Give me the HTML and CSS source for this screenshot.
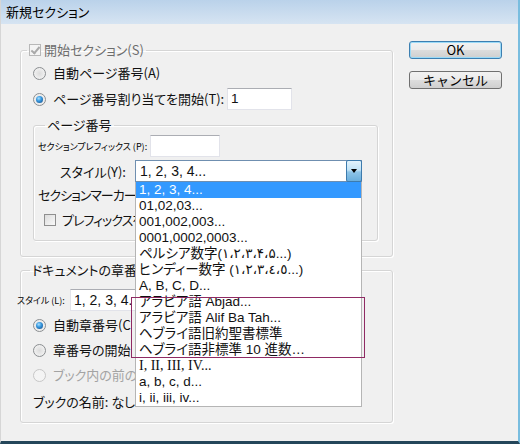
FILE: index.html
```html
<!DOCTYPE html>
<html lang="ja">
<head>
<meta charset="utf-8">
<title>新規セクション</title>
<link rel="stylesheet" href="styles.css">
</head>
<body>
<div class="window">
  <div class="titlebar">新規セクション</div>
  <div class="client">
    <div class="main">
      <fieldset class="group start">
        <legend><span class="check disabled on"></span><span class="muted">開始セクション(S)</span></legend>
        <div class="row"><span class="radio"></span><span class="lbl">自動ページ番号(A)</span></div>
        <div class="row gap4"><span class="radio on"></span><span class="lbl w174">ページ番号割り当てを開始(T):</span><span class="field w65"><span class="val">1</span></span></div>

        <fieldset class="group pages">
          <legend>ページ番号</legend>
          <div class="row"><span class="tiny w112">セクションプレフィックス (P):</span><span class="field w70"></span></div>
          <div class="row gap3">
            <span class="style-label">スタイル(Y):</span>
            <div class="combo">
              <span class="combo-val">1, 2, 3, 4...</span>
              <span class="combo-btn"><span class="arrow"></span></span>
              <ul class="droplist">
                <li class="sel">1, 2, 3, 4...</li>
                <li>01,02,03...</li>
                <li>001,002,003...</li>
                <li>0001,0002,0003...</li>
                <li>ペルシア数字(۱،۲،۳،۴،۵...)</li>
                <li>ヒンディー数字 (١،٢،٣،٤،٥...)</li>
                <li>A, B, C, D...</li>
                <li>アラビア語 Abjad...</li>
                <li>アラビア語 Alif Ba Tah...</li>
                <li>ヘブライ語旧約聖書標準</li>
                <li>ヘブライ語非標準 10 進数…</li>
                <li class="roman">I, II, III, IV...</li>
                <li>a, b, c, d...</li>
                <li>i, ii, iii, iv...</li>
                <li class="mark" aria-hidden="true"></li>
              </ul>
            </div>
          </div>
          <div class="row short gap3"><span class="lbl clip tight w97">セクションマーカー(</span></div>
          <div class="row short gap5 indent6"><span class="check"></span><span class="lbl clip tight w73">プレフィックスを</span></div>
        </fieldset>
      </fieldset>

      <fieldset class="group chapter">
        <legend>ドキュメントの章番</legend>
        <div class="row"><span class="tiny out">スタイル (L):</span><span class="field w230"><span class="val big clip w60">1, 2, 3, 4.</span></span></div>
        <div class="row gap3"><span class="radio on"></span><span class="lbl clip w78">自動章番号(C</span></div>
        <div class="row gap3"><span class="radio"></span><span class="lbl clip w78">章番号の開始</span></div>
        <div class="row gap3"><span class="radio disabled"></span><span class="lbl dim clip w82">ブック内の前の</span></div>
        <div class="row short gap6"><span class="lbl">ブックの名前: なし</span></div>
      </fieldset>
    </div>

    <div class="buttons">
      <button class="btn default">OK</button>
      <button class="btn">キャンセル</button>
    </div>
  </div>
</div>
</body>
</html>
```
FILE: styles.css
```css
html, body {
  margin: 0;
  padding: 0;
}

body {
  width: 520px;
  height: 444px;
  overflow: hidden;
  background: #f0f0f0;
  font-family: "Noto Sans CJK JP", "DejaVu Sans", sans-serif;
  font-size: 13px;
  font-feature-settings: "palt";
  color: #111;
}

.window {
  box-sizing: border-box;
  width: 520px;
  height: 444px;
  display: flex;
  flex-direction: column;
  border-left: 1px solid #d6d6d6;
  border-right: 2px solid #79bddf;
  border-bottom: 3px solid #24465a;
  background: #f0f0f0;
}

.titlebar {
  flex: none;
  height: 24px;
  padding-left: 5px;
  font-size: 13px;
  line-height: 24px;
  color: #000;
  background: linear-gradient(#bad2ea, #d6e4f2);
}

.client {
  flex: 1;
  display: flex;
  align-items: flex-start;
  gap: 16px;
  padding: 18px 0 0 19px;
}

.main {
  width: 373px;
  display: flex;
  flex-direction: column;
}

/* group boxes */
.group {
  margin: 0;
  min-width: 0;
  border: 1px solid #d5d5d5;
  border-radius: 3px;
  box-shadow: inset 1px 1px 0 #fff, 1px 1px 0 #fff;
}

.group > legend {
  padding: 0 2px;
  line-height: 16px;
  display: flex;
  align-items: center;
  gap: 3px;
}

.start {
  padding: 4px 14px 15px 12px;
}

.start > legend {
  margin-left: -6px;
}

.pages {
  margin-top: 7px;
  padding: 2px 10px 10px 4px;
}

.pages > legend {
  margin-left: 7px;
}

.chapter {
  margin-top: 5px;
  padding: 11px 14px 10px 12px;
}

.chapter > legend {
  margin-left: -3px;
  padding-right: 0;
}

/* rows */
.row {
  display: flex;
  align-items: center;
  height: 22px;
  white-space: nowrap;
}

.row.short { height: 20px; }
.gap3 { margin-top: 3px; }
.gap4 { margin-top: 4px; }
.gap5 { margin-top: 5px; }
.gap6 { margin-top: 6px; }
.indent6 { padding-left: 6px; }

.lbl {
  line-height: 20px;
}

.radio + .lbl {
  margin-left: 7px;
}

.check + .lbl {
  margin-left: 6px;
}

/* labels running under the open list are cut at its left edge */
.clip {
  display: block;
  flex: none;
  overflow: hidden;
  white-space: nowrap;
}

.tight { letter-spacing: -1px; }

.w60 { width: 60px; }
.w73 { width: 73px; }
.w78 { width: 78px; }
.w82 { width: 82px; }
.w97 { width: 97px; }

.muted { color: #6d6d6d; }
.dim { color: #a3a3a3; }

.w174 { width: 174px; flex: none; }
.w112 { width: 112px; flex: none; }

.tiny {
  font-size: 9px;
  color: #000;
}

.tiny.out {
  margin-left: -16px;
  width: 53px;
  flex: none;
}

/* text fields */
.field {
  box-sizing: border-box;
  height: 22px;
  flex: none;
  display: flex;
  align-items: center;
  padding-left: 3px;
  background: #fff;
  border: 1px solid #e2e3ea;
  border-top-color: #abadb3;
}

.w65 { width: 65px; }
.w70 { width: 70px; }
.w230 { width: 230px; }

.val {
  font-family: "Liberation Sans", sans-serif;
  font-size: 13.5px;
  line-height: 16px;
}

.val.big {
  font-size: 14px;
}

/* radio buttons */
.radio {
  position: relative;
  flex: none;
  box-sizing: border-box;
  width: 13px;
  height: 13px;
  border-radius: 50%;
  border: 1px solid #8b8e91;
  background: radial-gradient(circle at 50% 50%, #dcdcdc 0, #ececec 55%, #f6f6f6 100%);
}

.radio.on::after {
  content: "";
  position: absolute;
  left: 2px;
  top: 2px;
  width: 7px;
  height: 7px;
  border-radius: 50%;
  background: radial-gradient(circle at 40% 35%, #a8e0ff 0, #3a9ae0 40%, #1a5a9a 85%);
}

.radio.disabled {
  border-color: #c7c7c7;
  background: #f4f4f4;
}

/* checkboxes */
.check {
  position: relative;
  flex: none;
  box-sizing: border-box;
  width: 12px;
  height: 12px;
  border: 1px solid #8f8f8f;
  background: linear-gradient(135deg, #dcdcdc, #f9f9f9);
}

.check.disabled {
  border-color: #b8b8b8;
  background: #f4f4f4;
}

.check.on::after {
  content: "";
  position: absolute;
  left: 3px;
  top: 0px;
  width: 3px;
  height: 7px;
  border: solid #a9a9a9;
  border-width: 0 2px 2px 0;
  transform: rotate(40deg);
}

/* style combo box with its open list */
.style-label {
  margin-left: 22px;
  width: 75px;
  flex: none;
}

.combo {
  position: relative;
  box-sizing: border-box;
  width: 227px;
  height: 22px;
  flex: none;
  display: flex;
  align-items: center;
  background: #fff;
  border: 1px solid #6f8fb0;
}

.combo-val {
  flex: 1;
  padding-left: 4px;
  font-family: "Liberation Sans", sans-serif;
  font-size: 14px;
  line-height: 16px;
}

.combo-btn {
  box-sizing: border-box;
  width: 16px;
  height: 22px;
  margin: -1px -1px -1px 0;
  display: flex;
  align-items: center;
  justify-content: center;
  border: 1px solid #3d7bad;
  border-radius: 2px;
  background: linear-gradient(#e3f3fc 0, #c2e3f6 45%, #8ec5e8 55%, #6aaedc 100%);
}

.arrow {
  width: 0;
  height: 0;
  border-left: 3.5px solid transparent;
  border-right: 3.5px solid transparent;
  border-top: 4px solid #000;
}

.droplist {
  position: absolute;
  left: -1px;
  top: 21px;
  z-index: 2;
  box-sizing: border-box;
  width: 227px;
  margin: 0;
  padding: 0;
  list-style: none;
  background: #fff;
  border: 1px solid #b5b5b5;
  border-top: none;
}

.droplist li {
  height: 16px;
  padding-left: 3px;
  font-family: "Liberation Sans", "Noto Sans CJK JP", "DejaVu Sans", sans-serif;
  font-size: 13.5px;
  line-height: 16px;
  white-space: nowrap;
  color: #111;
}

.droplist li.sel {
  background: #3399ff;
  color: #fff;
}

.droplist li.roman {
  font-family: "Liberation Serif", serif;
  font-size: 14px;
}

.droplist li.mark {
  position: absolute;
  left: -5px;
  top: 115px;
  box-sizing: border-box;
  width: 234px;
  height: 61px;
  padding: 0;
  border: 1px solid #8f2a63;
  background: transparent;
}

/* dialog buttons */
.buttons {
  width: 93px;
  flex: none;
  display: flex;
  flex-direction: column;
  gap: 12px;
  margin-top: -1px;
}

.btn {
  box-sizing: border-box;
  width: 93px;
  height: 18px;
  padding: 0;
  border: 1px solid #707070;
  border-radius: 3px;
  background: linear-gradient(#f2f2f2 0, #ebebeb 50%, #dddddd 50%, #cfcfcf 100%);
  font-family: "Noto Sans CJK JP", sans-serif;
  font-size: 13px;
  line-height: 16px;
  color: #000;
}

.btn.default {
  border-color: #3c7fb1;
  box-shadow: inset 0 0 0 1px #9bdaf7;
}
```
